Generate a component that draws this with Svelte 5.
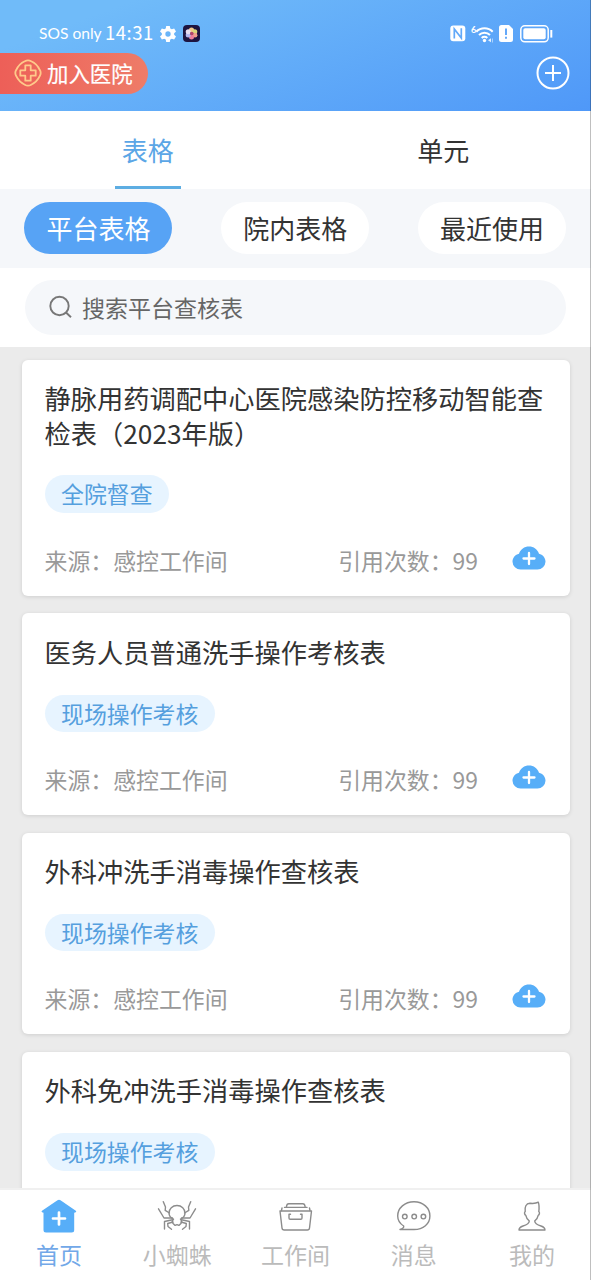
<script>
  let activeTab = "表格";
  let activeFilter = "平台表格";
  let activeNav = "home";

  const tabs = ["表格", "单元"];
  const filters = ["平台表格", "院内表格", "最近使用"];

  const forms = [
    {
      title: "静脉用药调配中心医院感染防控移动智能查检表（2023年版）",
      tag: "全院督查",
      source: "感控工作间",
      count: 99,
    },
    {
      title: "医务人员普通洗手操作考核表",
      tag: "现场操作考核",
      source: "感控工作间",
      count: 99,
    },
    {
      title: "外科冲洗手消毒操作查核表",
      tag: "现场操作考核",
      source: "感控工作间",
      count: 99,
    },
    {
      title: "外科免冲洗手消毒操作查核表",
      tag: "现场操作考核",
    },
  ];

  const navItems = [
    { id: "home", label: "首页" },
    { id: "spider", label: "小蜘蛛" },
    { id: "work", label: "工作间" },
    { id: "message", label: "消息" },
    { id: "mine", label: "我的" },
  ];
</script>

<main class="app">
  <header class="header">
    <div class="status-bar">
      <div class="status-left">
        <span class="carrier">SOS only</span>
        <span class="time">14:31</span>
        <svg class="gear" width="16" height="16" viewBox="0 0 24 24">
          <path
            fill="#fff"
            fill-rule="evenodd"
            d="M9.3 0h5.4l.7 3.6 2.3 1.3 3.5-1.2L24 8.4l-2.8 2.4v2.4l2.8 2.4-2.8 4.7-3.5-1.2-2.3 1.3-.7 3.6H9.3l-.7-3.6-2.3-1.3-3.5 1.2L0 15.6l2.8-2.4v-2.4L0 8.4l2.8-4.7 3.5 1.2 2.3-1.3zM12 8a4 4 0 1 0 0 8 4 4 0 0 0 0-8z"
          />
        </svg>
        <svg class="app-icon" width="17" height="17" viewBox="0 0 17 17">
          <rect width="17" height="17" rx="4" fill="#1d1440" />
          <circle cx="8.5" cy="5" r="2.6" fill="#f3c98a" />
          <circle cx="11.8" cy="6.8" r="2.5" fill="#d9d77a" />
          <circle cx="12" cy="10.2" r="2.4" fill="#f0a08c" />
          <circle cx="8.5" cy="12" r="2.5" fill="#ee7f9c" />
          <circle cx="5.2" cy="10" r="2.5" fill="#b5b5ee" />
          <circle cx="5.2" cy="6.8" r="2.5" fill="#e7dcf0" />
          <circle cx="8.8" cy="8.5" r="1.8" fill="#b2476c" />
        </svg>
      </div>
      <div class="status-right">
        <svg width="16" height="17" viewBox="0 0 16 17">
          <rect x="0.3" y="0.6" width="15" height="15.6" rx="3" fill="#fff" />
          <path d="M4.3 13.5V4l7 9V3.3" fill="none" stroke="#62a9f9" stroke-width="1.7" />
        </svg>
        <svg class="wifi" width="25" height="20" viewBox="0 0 25 20">
          <text x="0" y="8.5" font-size="9" font-weight="700" fill="#fff">6</text>
          <g fill="none" stroke="#fff" stroke-width="2">
            <path d="M5.3 7.7a11.6 11.6 0 0 1 16.4 0" />
            <path d="M8 11a7.8 7.8 0 0 1 11 0" />
            <path d="M10.7 14a4 4 0 0 1 5.6 0" />
          </g>
          <circle cx="13.5" cy="16.5" r="1.7" fill="#fff" />
          <path d="M17 16.2l3-2v4z" fill="#e4f1ff" />
          <path d="M21.5 14.5v4" stroke="#a9d1fd" />
        </svg>
        <svg class="sim" width="14" height="17" viewBox="0 0 14 17">
          <path
            fill="#fff"
            d="M2.5 0H10l4 4v10.5a2.5 2.5 0 0 1-2.5 2.5h-9A2.5 2.5 0 0 1 0 14.5v-12A2.5 2.5 0 0 1 2.5 0z"
          />
          <path d="M7 3.5V10M7 11.8v2" stroke="#5da5f9" stroke-width="1.9" />
        </svg>
        <svg class="battery" width="33" height="18" viewBox="0 0 33 18">
          <rect x="0.8" y="0.8" width="27.4" height="16" rx="4" fill="none" stroke="#fff" stroke-width="1.5" />
          <rect x="3.3" y="3.3" width="22.4" height="11" rx="1.8" fill="#fff" />
          <path d="M31.3 5v7.6" stroke="#fff" stroke-width="2" />
        </svg>
      </div>
    </div>
    <div class="header-row">
      <button class="join">
        <svg width="28" height="28" viewBox="0 0 28 28" fill="none" stroke="#ffc98a" stroke-linejoin="round">
          <path
            stroke-width="1.8"
            d="M10.8 2.3q3.2-2 6.4 0 5.8 2.7 8.5 8.5 2 3.2 0 6.4-2.7 5.8-8.5 8.5-3.2 2-6.4 0-5.8-2.7-8.5-8.5-2-3.2 0-6.4 2.7-5.8 8.5-8.5z"
          />
          <path stroke-width="1.8" d="M11.3 6.3h5.4v5h5v5.4h-5v5h-5.4v-5h-5v-5.4h5z" />
        </svg>
        <span>加入医院</span>
      </button>
      <button class="add" aria-label="添加">
        <svg width="34" height="34" viewBox="0 0 34 34" fill="none" stroke="#fff" stroke-width="2">
          <circle cx="17" cy="17" r="15.5" />
          <path d="M17 9v16M9 17h16" />
        </svg>
      </button>
    </div>
  </header>

  <div class="tabs">
    {#each tabs as tab}
      <button class="tab" class:active={tab === activeTab} on:click={() => (activeTab = tab)}>
        <span>{tab}</span>
      </button>
    {/each}
  </div>

  <div class="filters">
    {#each filters as filter}
      <button
        class="filter"
        class:active={filter === activeFilter}
        on:click={() => (activeFilter = filter)}>{filter}</button
      >
    {/each}
  </div>

  <div class="search-wrap">
    <div class="search">
      <svg width="24" height="24" viewBox="0 0 24 24" fill="none" stroke="#777" stroke-width="1.9">
        <circle cx="10.5" cy="11" r="9.2" />
        <path d="M17 17.5l5 4.8" />
      </svg>
      <span>搜索平台查核表</span>
    </div>
  </div>

  <section class="list">
    {#each forms as form}
      <article class="card">
        <div class="card-title">{form.title}</div>
        <span class="tag">{form.tag}</span>
        <div class="card-footer">
          {#if form.source}
            <span>来源：{form.source}</span>
            <span class="count">引用次数：{form.count}</span>
            <svg class="cloud" width="34" height="24" viewBox="0 0 34 24">
              <path
                fill="#57aef8"
                d="M8.5 23.5A8 8 0 0 1 .5 15.8C.5 11.5 3.3 8.6 7 7.7 8.6 3.2 12.3.5 17 .5s8.400 2.700 10 7.200c3.700.900 6.500 3.800 6.500 8.100a8 8 0 0 1-8 7.700z"
              />
              <path d="M17 7v11M11.5 12.5h11" stroke="#fff" stroke-width="2.3" stroke-linecap="round" />
            </svg>
          {/if}
        </div>
      </article>
    {/each}
  </section>

  <nav class="bottom-nav">
    {#each navItems as item}
      <button class="nav-item" class:active={item.id === activeNav} on:click={() => (activeNav = item.id)}>
        <svg
          width="40"
          height="36"
          viewBox="0 0 40 36"
          fill="none"
          stroke="#8c8c8c"
          stroke-width="1.4"
          stroke-linejoin="round"
          stroke-linecap="round"
        >
          {#if item.id === "home"}
            <path
              fill="#57aef8"
              stroke="none"
              d="M18.5 1.2q1.5-1 3 0L36.8 11.8q1 .8 0 1.5l-1.6.5V31q0 2.5-2.5 2.5H7Q4.5 33.5 4.5 31V13.800L3 13.300q-1-.7 0-1.500z"
            />
            <path d="M20 13.5v12M14 19.5h12" stroke="#fff" stroke-width="2.7" />
          {:else if item.id === "spider"}
            <path
              d="M16.5 20.2c-2.7-1.2-4.5-3.300-4.500-6.200 0-4.300 3.400-7.500 8-7.500s8 3.200 8 7.500c0 2.900-1.800 5-4.500 6.200 1.400 1.200 1.400 3 .4 4.300l-2 1.900-1.900-.8-1.900.8-2-1.900c-1-1.300-1-3.100.4-4.300z"
            />
            <path d="M12.5 14l-4.300-2.700.3-3.300-2.200-5.300M15.500 19H7L1.500 9.800M15.500 20.800l-8 1.700v7.500M16 23l-5.300 1.500.3 3 3.500 2.700" />
            <path d="M27.500 14l4.300-2.700-.3-3.300 2.200-5.300M24.500 19H33l5.500-9.200M24.500 20.800l8 1.700v7.500M24 23l5.300 1.500-.3 3-3.500 2.700" />
          {:else if item.id === "work"}
            <path d="M4 12h31.500l-2 17q-.2 2-2.200 2H8.200q-2 0-2.200-2z" />
            <path d="M5.500 11.500L6 9M34 11.500L33.500 9M8.500 8.400h22.500M10.500 7.500q.3-2.800 2.300-2.800h14q2 0 2.300 2.800" />
            <path d="M14.500 15.200H13V19q0 1.200 1.200 1.200h10.600q1.200 0 1.200-1.200v-3.800h-1.500" />
          {:else if item.id === "message"}
            <path
              d="M9.700 27C6 24.600 3.700 21.200 3.700 16.900 3.700 9 10.800 2.800 20 2.800s15.900 6.200 15.900 14.100S29.200 30.500 20 30.500H6c2.500-.7 4.200-1.900 3.700-3.500z"
            />
            <circle cx="10.8" cy="17.6" r="2.3" />
            <circle cx="20.200" cy="17.6" r="2.3" />
            <circle cx="29.400" cy="17.6" r="2.3" />
          {:else}
            <path
              d="M17.300 22c-2-1.700-3.100-3.300-3.500-5.700-1.300-.6-1.800-3-.6-3.600C12.500 7.700 14 4.600 18 4.300c3.200.3 6 .3 8.300-1.100 1 2.600.9 6.200.5 9.500 1.200.6.7 3-.6 3.600-.4 2.400-1.500 4-3.500 5.700.2 3 2.800 4 6.300 5 2.500.8 4 2 4 4H7c0-2 1.500-3.200 4-4 3.500-1 6.100-2 6.300-5z"
            />
          {/if}
        </svg>
        <span>{item.label}</span>
      </button>
    {/each}
  </nav>
  <div class="edge"></div>
</main>

<style>
  :global(body) {
    margin: 0;
    overflow: hidden;
  }
  .app {
    position: relative;
    display: flex;
    flex-direction: column;
    width: 591px;
    height: 1280px;
    overflow: hidden;
    background: #fff;
    color: #333;
    font-family: "Noto Sans CJK SC", sans-serif;
  }
  button {
    border: none;
    padding: 0;
    margin: 0;
    background: none;
    color: inherit;
    font-family: inherit;
  }
  svg {
    display: block;
    flex-shrink: 0;
  }
  .header {
    flex: none;
    height: 110.5px;
    background: linear-gradient(160deg, #70bbf9 15%, #4f98f8 100%);
    color: #fff;
  }
  .status-bar {
    display: flex;
    justify-content: space-between;
    box-sizing: border-box;
    height: 53px;
    padding: 14px 38px 0 39px;
  }
  .status-left,
  .status-right {
    display: flex;
    align-items: center;
    height: 39px;
    font-family: Lato, sans-serif;
  }
  .carrier {
    width: 63px;
    height: 38px;
    font-size: 15.6px;
    line-height: 37px;
    white-space: nowrap;
  }
  .time {
    width: 49px;
    height: 38px;
    margin-left: 3px;
    font-family: "Noto Sans CJK SC", sans-serif;
    font-size: 18.5px;
    line-height: 35px;
    letter-spacing: 0.5px;
  }
  .gear {
    margin-left: 6px;
  }
  .app-icon {
    margin-left: 7px;
  }
  .wifi {
    margin-left: 5px;
  }
  .sim {
    margin-left: 3px;
  }
  .battery {
    margin-left: 7px;
  }
  .header-row {
    display: flex;
    justify-content: space-between;
    align-items: center;
    height: 41px;
    padding-right: 21px;
  }
  .join {
    display: flex;
    align-items: center;
    gap: 5px;
    box-sizing: border-box;
    width: 148px;
    height: 41px;
    padding-left: 14px;
    border-radius: 0 21px 21px 0;
    background: linear-gradient(90deg, #ed5f58, #ee7c68);
    color: #fff;
    font-size: 21.4px;
    line-height: 36px;
    -webkit-text-stroke: 0.2px #fff;
  }
  .join svg,
  .add svg {
    margin-top: -1px;
  }
  .join span {
    height: 38px;
  }
  .tabs {
    display: flex;
    flex: none;
    height: 78.5px;
  }
  .tab {
    display: flex;
    flex: 1;
    justify-content: center;
    font-size: 26px;
  }
  .tab span {
    box-sizing: border-box;
    width: 66px;
    height: 78px;
    line-height: 77px;
    border-bottom: 3px solid transparent;
  }
  .tab.active {
    color: #5ba6e6;
  }
  .tab.active span {
    border-color: #5dade2;
  }
  .filters {
    display: flex;
    flex: none;
    justify-content: space-between;
    box-sizing: border-box;
    height: 79px;
    padding: 13px 25px 0 24.4px;
    background: #f5f7fa;
  }
  .filter {
    width: 148px;
    height: 52px;
    border-radius: 26px;
    background: #fff;
    font-size: 26px;
    line-height: 52px;
  }
  .filter.active {
    background: #57a3f5;
    color: #fff;
  }
  .search-wrap {
    flex: none;
    box-sizing: border-box;
    height: 79px;
    padding: 12px 25px;
  }
  .search {
    display: flex;
    align-items: center;
    gap: 9px;
    height: 55px;
    padding-left: 24px;
    border-radius: 28px;
    background: #f5f7fa;
    color: #666;
    font-size: 23px;
  }
  .search span {
    height: 34px;
    line-height: 32px;
  }
  .search svg {
    margin-top: -1px;
  }
  .list {
    display: flex;
    flex: 1;
    flex-direction: column;
    gap: 17.6px;
    min-height: 0;
    padding: 12.7px 21.5px 0;
    overflow: hidden;
    background: #ebebeb;
  }
  .card {
    flex: none;
    padding: 21.5px 23px 18.8px;
    border-radius: 6px;
    background: #fff;
    box-shadow: 0 1px 4px rgba(0, 0, 0, 0.12);
  }
  .card-title {
    margin-right: -4px;
    font-size: 26.25px;
    line-height: 34.5px;
  }
  .tag {
    display: block;
    width: fit-content;
    height: 37.5px;
    margin-top: 25.3px;
    padding: 0 16.5px;
    border-radius: 19px;
    background: #e7f4ff;
    color: #559fde;
    font-size: 22.9px;
    line-height: 37.5px;
  }
  .card-footer {
    display: flex;
    align-items: center;
    height: 34px;
    margin-top: 30px;
    color: #999;
    font-size: 22.9px;
    line-height: 34px;
  }
  .count {
    margin-left: auto;
  }
  .cloud {
    margin: -4px 1px 0 33.5px;
  }
  .bottom-nav {
    display: flex;
    flex: none;
    box-sizing: border-box;
    height: 92px;
    border-top: 2px solid #f0f0f0;
    background: #fff;
  }
  .nav-item {
    display: flex;
    flex: 1;
    flex-direction: column;
    align-items: center;
    padding-top: 9px;
    color: #bbb;
    font-size: 23px;
    line-height: 34px;
  }
  .nav-item span {
    margin-top: 2px;
  }
  .nav-item.active {
    color: #72a8e8;
  }
  /* thin line down the right side of the screen */
  .edge {
    position: absolute;
    top: 0;
    right: 0;
    width: 1px;
    height: 100%;
    background: rgba(0, 0, 0, 0.25);
  }
</style>
